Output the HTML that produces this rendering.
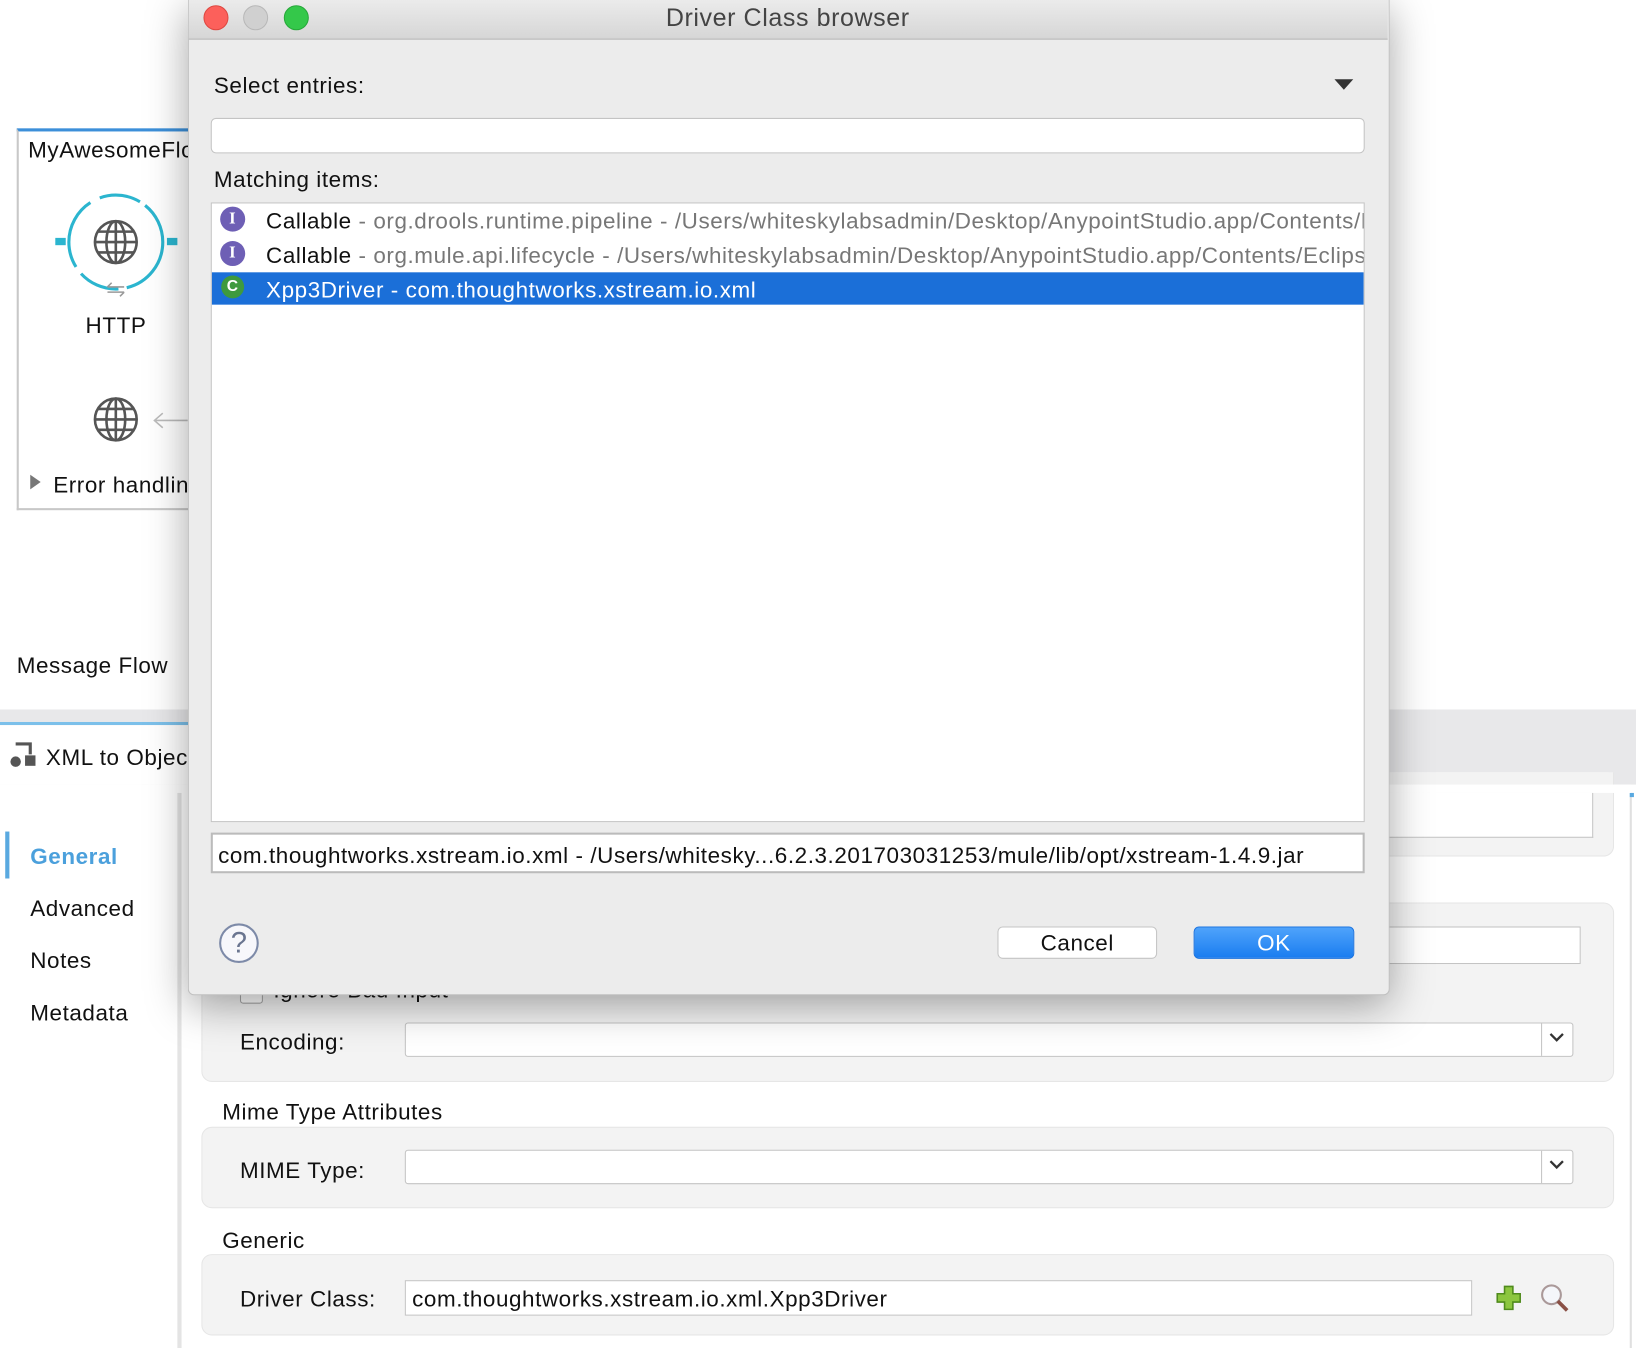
<!DOCTYPE html>
<html><head><meta charset="utf-8"><style>
html,body{margin:0;padding:0;width:1636px;height:1348px;overflow:hidden;background:#fff}
#s{position:absolute;left:0;top:0;width:1568px;height:1292px;transform:scale(1.04337,1.04334);transform-origin:0 0;font-family:"Liberation Sans",Arial,sans-serif;font-size:21px;letter-spacing:0.55px;color:#111}
.a{position:absolute}
.sec{position:absolute;background:#f3f3f3;border:1px solid #e6e6e6;border-radius:10px}
.fld{position:absolute;background:#fff;border:1px solid #c4c4c4}
.lbl{position:absolute;font-size:21.5px}
</style></head><body><div id="s">
<!-- left flow panel -->
<div class="a" style="left:16px;top:123px;width:170px;height:361px;border:2px solid #c8c8c8;border-top:3px solid #3c8fd9;background:#fff"></div>
<div class="a" style="left:27px;top:132px;font-size:21.5px">MyAwesomeFlow</div>
<svg class="a" style="left:50px;top:180px" width="124" height="110" viewBox="0 0 124 110">
<circle cx="61" cy="52" r="45" fill="none" stroke="#2bb5cf" stroke-width="3" stroke-dasharray="60 8 40 8 70 10 40 6"/>
<rect x="3" y="48" width="10" height="7" fill="#2bb5cf"/><rect x="110" y="48" width="10" height="7" fill="#2bb5cf"/>
<g fill="none" stroke="#555" stroke-width="2.5"><circle cx="61" cy="52" r="20"/><ellipse cx="61" cy="52" rx="9" ry="20"/><line x1="41" y1="52" x2="81" y2="52"/><line x1="61" y1="32" x2="61" y2="72"/><line x1="44" y1="42" x2="78" y2="42"/><line x1="44" y1="62" x2="78" y2="62"/></g>
<path d="M53 95h16M57 91l-4 4M53 100h16M65 104l4-4" stroke="#999" stroke-width="1.5" fill="none"/></svg>
<div class="a" style="left:82px;top:300px;font-size:21.5px">HTTP</div>
<svg class="a" style="left:88px;top:379px" width="92" height="46"><g fill="none" stroke="#555" stroke-width="2.5"><circle cx="23" cy="23" r="20"/><ellipse cx="23" cy="23" rx="9" ry="20"/><line x1="3" y1="23" x2="43" y2="23"/><line x1="23" y1="3" x2="23" y2="43"/><line x1="6" y1="13" x2="40" y2="13"/><line x1="6" y1="33" x2="40" y2="33"/></g><path d="M60 24h32M68 17l-8 7 8 7" stroke="#bbb" stroke-width="1.5" fill="none"/></svg>
<div class="a" style="left:29px;top:455px;width:0;height:0;border-left:10px solid #777;border-top:7px solid transparent;border-bottom:7px solid transparent"></div>
<div class="a" style="left:51px;top:453px;font-size:21.5px;white-space:nowrap">Error handling</div>
<div class="a" style="left:16px;top:626px;font-size:21.5px">Message Flow</div>
<!-- band -->
<div class="a" style="left:0;top:680px;width:1568px;height:72px;background:#e8e8ea"></div>
<div class="a" style="left:0;top:692px;width:185px;height:3px;background:#7cc0ea"></div>
<div class="a" style="left:0;top:695px;width:185px;height:57px;background:#fff"></div>
<svg class="a" style="left:9px;top:709px" width="28" height="28"><path d="M6 4h14v10" stroke="#555" stroke-width="3" fill="none"/><circle cx="6" cy="21" r="5" fill="#555"/><rect x="15" y="15" width="10" height="10" fill="#555"/></svg>
<div class="a" style="left:44px;top:714px;font-size:21.5px;white-space:nowrap">XML to Object</div>
<!-- left nav -->
<div class="a" style="left:170px;top:760px;width:4px;height:532px;background:#e4e4e4"></div>
<div class="a" style="left:5px;top:797px;width:4px;height:45px;background:#5aa9e0"></div>
<div class="a" style="left:29px;top:809px;font-size:21.5px;font-weight:bold;color:#4ba0dc">General</div>
<div class="a" style="left:29px;top:859px;font-size:21.5px">Advanced</div>
<div class="a" style="left:29px;top:909px;font-size:21.5px">Notes</div>
<div class="a" style="left:29px;top:959px;font-size:21.5px">Metadata</div>
<div class="a" style="left:1562px;top:760px;width:2px;height:532px;background:#e0e0e0"></div>
<div class="a" style="left:1562px;top:760px;width:4px;height:4px;background:#5aa9e0"></div>
<!-- right form -->
<div class="sec" style="left:193px;top:740px;width:1352px;height:80px;border-top:none;border-radius:0 0 10px 10px"></div>
<div class="a" style="left:193px;top:752px;width:1370px;height:8px;background:#fff"></div>
<div class="a" style="left:1200px;top:760px;width:1352px;height:0"></div>
<div class="fld" style="left:1200px;top:760px;width:325px;height:42px;border-top:none"></div>
<div class="sec" style="left:193px;top:865px;width:1352px;height:170px"></div>
<div class="fld" style="left:1200px;top:888px;width:313px;height:34px"></div>
<div class="a" style="left:230px;top:940px;width:20px;height:20px;border:1px solid #aaa;border-radius:3px;background:#fff"></div>
<div class="lbl" style="left:262px;top:937px">Ignore Bad Input</div>
<div class="lbl" style="left:230px;top:987px">Encoding:</div>
<div class="fld" style="left:388px;top:980px;width:1118px;height:31px;border-radius:3px"></div>
<div class="a" style="left:1477px;top:981px;width:1px;height:31px;background:#c4c4c4"></div>
<svg class="a" style="left:1484px;top:988px" width="16" height="14"><path d="M2 3l6 6 6-6" stroke="#333" stroke-width="2.2" fill="none"/></svg>
<div class="lbl" style="left:213px;top:1054px">Mime Type Attributes</div>
<div class="sec" style="left:193px;top:1080px;width:1352px;height:76px"></div>
<div class="lbl" style="left:230px;top:1110px">MIME Type:</div>
<div class="fld" style="left:388px;top:1102px;width:1118px;height:31px;border-radius:3px"></div>
<div class="a" style="left:1477px;top:1103px;width:1px;height:31px;background:#c4c4c4"></div>
<svg class="a" style="left:1484px;top:1110px" width="16" height="14"><path d="M2 3l6 6 6-6" stroke="#333" stroke-width="2.2" fill="none"/></svg>
<div class="lbl" style="left:213px;top:1177px">Generic</div>
<div class="sec" style="left:193px;top:1202px;width:1352px;height:76px"></div>
<div class="lbl" style="left:230px;top:1233px">Driver Class:</div>
<div class="fld" style="left:388px;top:1227px;width:1021px;height:32px"></div>
<div class="a" style="left:395px;top:1233px;font-size:21.5px">com.thoughtworks.xstream.io.xml.Xpp3Driver</div>
<svg class="a" style="left:1432px;top:1230px" width="28" height="28"><path d="M10 3h8v7h7v8h-7v7h-8v-7H3v-8h7z" fill="#8cc63f" stroke="#4f8a1c" stroke-width="1.5"/></svg>
<svg class="a" style="left:1474px;top:1228px" width="32" height="32"><circle cx="13" cy="13" r="9" fill="#f4f6fa" stroke="#a99" stroke-width="2"/><path d="M19 19l9 9" stroke="#8a5045" stroke-width="3.5"/></svg>
<!-- dialog -->
<div class="a" style="left:180px;top:0;width:1150px;height:953px;background:#ececec;border:1px solid #c0c0c0;border-top:none;border-radius:0 0 6px 6px;box-shadow:0 10px 40px rgba(0,0,0,.35)"></div>
<div class="a" style="left:181px;top:0;width:1149px;height:37px;background:linear-gradient(#ebebeb,#d6d6d6);border-bottom:1px solid #b4b4b4"></div>
<div class="a" style="left:195px;top:5px;width:24px;height:24px;border-radius:50%;background:#fc605b;border:1px solid #de4841;box-sizing:border-box"></div>
<div class="a" style="left:233px;top:5px;width:24px;height:24px;border-radius:50%;background:#d0d0d0;border:1px solid #b8b8b8;box-sizing:border-box"></div>
<div class="a" style="left:272px;top:5px;width:24px;height:24px;border-radius:50%;background:#34c84a;border:1px solid #27a83a;box-sizing:border-box"></div>
<div class="a" style="left:180px;top:4px;width:1150px;text-align:center;font-size:24px;color:#444">Driver Class browser</div>
<div class="lbl" style="left:205px;top:70px">Select entries:</div>
<div class="a" style="left:1279px;top:76px;width:0;height:0;border-top:10px solid #333;border-left:9px solid transparent;border-right:9px solid transparent"></div>
<div class="fld" style="left:202px;top:113px;width:1104px;height:32px;border-radius:5px"></div>
<div class="lbl" style="left:205px;top:160px">Matching items:</div>
<div class="fld" style="left:202px;top:194px;width:1104px;height:592px;overflow:hidden">
 <div class="a" style="left:0;top:66px;width:1104px;height:31px;background:#1b6fd8"></div>
 <div class="a" style="left:8px;top:3px;width:24px;height:24px;border-radius:50%;background:#6e5fb5;color:#fff;font:bold 16px 'Liberation Serif',serif;text-align:center;line-height:24px">I</div>
 <div class="a" style="left:8px;top:36px;width:24px;height:24px;border-radius:50%;background:#6e5fb5;color:#fff;font:bold 16px 'Liberation Serif',serif;text-align:center;line-height:24px">I</div>
 <div class="a" style="left:9px;top:69px;width:22px;height:22px;border-radius:50%;background:#3e9a3e;color:#fff;font:bold 15px 'Liberation Sans';text-align:center;line-height:22px">C</div>
 <div class="a" style="left:52px;top:5px;white-space:nowrap;font-size:21.5px">Callable <span style="color:#777">- org.drools.runtime.pipeline - /Users/whiteskylabsadmin/Desktop/AnypointStudio.app/Contents/Eclipse</span></div>
 <div class="a" style="left:52px;top:38px;white-space:nowrap;font-size:21.5px">Callable <span style="color:#777">- org.mule.api.lifecycle - /Users/whiteskylabsadmin/Desktop/AnypointStudio.app/Contents/Eclipse</span></div>
 <div class="a" style="left:52px;top:71px;white-space:nowrap;font-size:21.5px;color:#fff">Xpp3Driver - com.thoughtworks.xstream.io.xml</div>
</div>
<div class="fld" style="left:202px;top:798px;box-sizing:border-box;width:1106px;height:39px;border:2px solid #bbb"></div>
<div class="a" style="left:209px;top:808px;font-size:21.5px;white-space:nowrap">com.thoughtworks.xstream.io.xml - /Users/whitesky...6.2.3.201703031253/mule/lib/opt/xstream-1.4.9.jar</div>
<div class="a" style="left:210px;top:885px;width:38px;height:38px;border-radius:50%;border:2px solid #7d8aa8;box-sizing:border-box;background:#f7f7fb;text-align:center;font-size:28px;line-height:34px;color:#6a7590;letter-spacing:0">?</div>
<div class="a" style="left:956px;top:888px;width:153px;height:31px;background:#fff;border:1px solid #c4c4c4;border-radius:5px;box-sizing:border-box;text-align:center;line-height:31px;font-size:21.5px">Cancel</div>
<div class="a" style="left:1144px;top:888px;width:154px;height:31px;background:linear-gradient(#4fa3fb,#1a7df0);border:1px solid #1a73e0;border-radius:5px;box-sizing:border-box;text-align:center;line-height:31px;font-size:21.5px;color:#fff">OK</div>
</div></body></html>
